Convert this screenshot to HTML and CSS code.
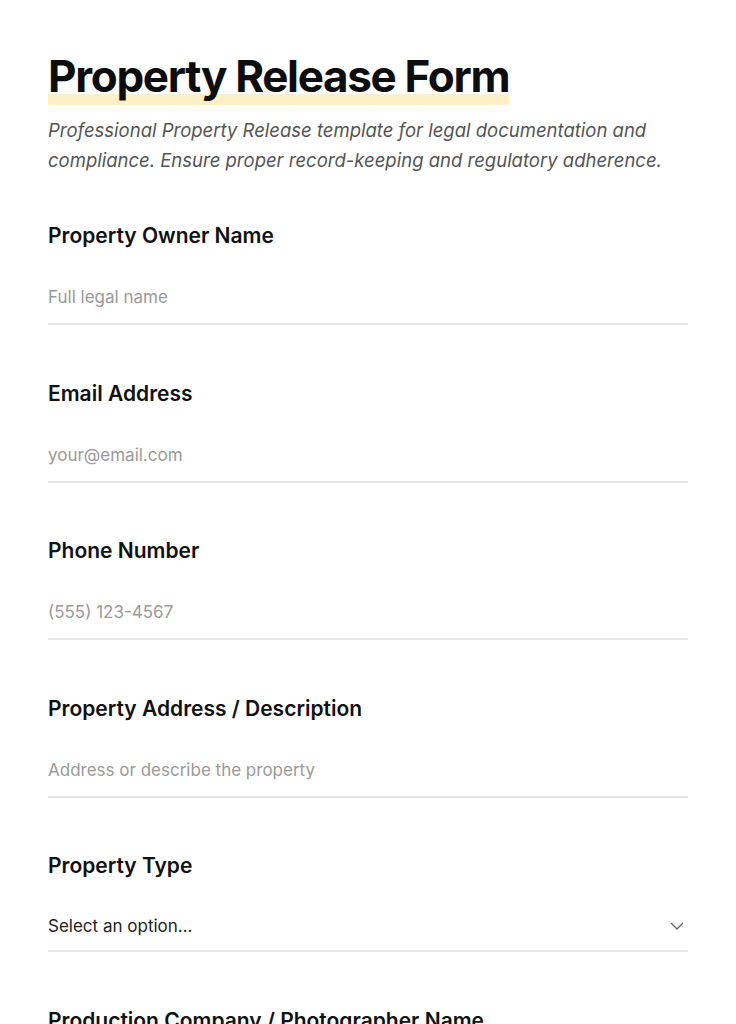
FILE: index.html
```html
<!DOCTYPE html>
<html lang="en">
<head>
    <meta charset="UTF-8">
    <meta name="viewport" content="width=device-width, initial-scale=1.0">
    <title>Property Release Form</title>
    <link rel="stylesheet" href="styles.css">
</head>
<body>
    <div class="page">
        <div class="header">
            <h1><span class="highlight">Property Release Form</span></h1>
            <p class="subtitle">Professional Property Release template for legal documentation and compliance. Ensure proper record-keeping and regulatory adherence.</p>
        </div>

        <form class="releaseForm">
            <div class="field">
                <label for="ownerName">Property Owner Name</label>
                <input type="text" id="ownerName" placeholder="Full legal name">
            </div>

            <div class="field">
                <label for="email">Email Address</label>
                <input type="email" id="email" placeholder="your@email.com">
            </div>

            <div class="field">
                <label for="phone">Phone Number</label>
                <input type="tel" id="phone" placeholder="(555) 123-4567">
            </div>

            <div class="field">
                <label for="address">Property Address / Description</label>
                <input type="text" id="address" placeholder="Address or describe the property">
            </div>

            <div class="field">
                <label for="propType">Property Type</label>
                <div class="selectWrap">
                    <select id="propType">
                        <option>Select an option...</option>
                        <option>Residential</option>
                        <option>Commercial</option>
                        <option>Public</option>
                    </select>
                    <svg class="chevron" width="14" height="8" viewBox="0 0 14 8">
                        <path d="M1 1l6 6 6-6" fill="none" stroke="#666" stroke-width="1.3"/>
                    </svg>
                </div>
            </div>

            <div class="field">
                <label for="company">Production Company / Photographer Name</label>
                <input type="text" id="company" placeholder="Company or photographer name">
            </div>
        </form>
    </div>
</body>
</html>
```

FILE: styles.css
```css
*{
    margin: 0px;
    box-sizing: border-box;
}
body{
    background-color: #ffffff;
    color: #111111;
    font-family: Inter, "Noto Sans", sans-serif;
}
.page{
    padding: 48px 48px;
}
h1{
    font-size: 44px;
    line-height: 56px;
    font-weight: 700;
    letter-spacing: -0.03em;
    color: #0d0d0d;
}
.highlight{
    background: linear-gradient(to top, #fdf0c9 0px, #fdf0c9 11px, transparent 11px);
    padding-bottom: 2px;
}
.subtitle{
    margin-top: 11px;
    font-size: 18.5px;
    line-height: 30px;
    font-style: italic;
    color: #555555;
}
.releaseForm{
    margin-top: 47px;
    display: flex;
    flex-direction: column;
    gap: 54.5px;
}
.field{
    display: flex;
    flex-direction: column;
    gap: 21px;
}
label{
    font-size: 21px;
    line-height: 28px;
    font-weight: 600;
    color: #111111;
}
input, select{
    width: 100%;
    font-family: inherit;
    font-size: 17px;
    line-height: 20px;
    padding: 16px 0px;
    border: none;
    border-bottom: 2px solid #e6e6e6;
    outline: none;
    background: transparent;
    color: #222222;
}
input::placeholder{
    color: #9a9a9a;
}
.selectWrap{
    position: relative;
}
select{
    appearance: none;
    height: 51px;
    padding: 14px 0px;
}
.chevron{
    position: absolute;
    right: 4px;
    top: 21px;
    pointer-events: none;
}
```
